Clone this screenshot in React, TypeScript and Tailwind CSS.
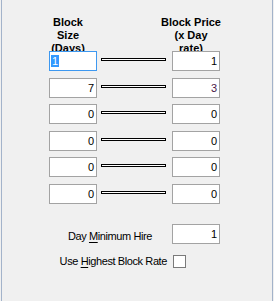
import React from "react";

const font = { fontFamily: '"Liberation Sans", Arial, sans-serif' };

function Box({ value, color = "text-black", focused = false }: { value: string; color?: string; focused?: boolean }) {
  if (focused) {
    return (
      <div className="w-[48px] h-[20px] bg-white border border-[#3d98f0] flex items-center pl-[1px] shrink-0">
        <span className="bg-[#3399ff] text-white text-[11px] leading-[12px] px-[1px]">{value}</span>
      </div>
    );
  }
  return (
    <div className={`w-[48px] h-[20px] bg-white border border-[#a3a3a3] flex items-center justify-end pr-[2px] text-[11px] leading-[12px] shrink-0 ${color}`}>
      {value}
    </div>
  );
}

function Row({ left, right, rightColor, focused, mt }: { left: string; right: string; rightColor?: string; focused?: boolean; mt: string }) {
  return (
    <div className={`flex ml-[47px] ${mt}`}>
      <Box value={left} focused={focused} />
      <div className="ml-[4px] mt-[7px] w-[65px] h-[3px] border border-black bg-white shrink-0" />
      <div className="ml-[6px]">
        <Box value={right} color={rightColor} />
      </div>
    </div>
  );
}

export default function App() {
  return (
    <div className="w-[274px] h-[301px] bg-[#f0f0f0] px-[1px] flex text-black" style={font}>
      <div className="flex-1 border-l border-r border-[#a3b3ca] flex flex-col pt-[14px]">
        <div className="flex h-[37px] overflow-hidden font-bold text-[11px] leading-[13px] pt-[2px]">
          <div className="ml-[36px] w-[60px] text-center">
            Block<br />Size<br />(Days)
          </div>
          <div className="ml-[58px] w-[70px] text-center">
            Block Price<br />(x Day<br />rate)
          </div>
        </div>
        <Row left="1" right="1" focused mt="mt-0" />
        <Row left="7" right="3" rightColor="text-[#4a1848]" mt="mt-[7px]" />
        <Row left="0" right="0" mt="mt-[6px]" />
        <Row left="0" right="0" mt="mt-[7px]" />
        <Row left="0" right="0" mt="mt-[6px]" />
        <Row left="0" right="0" mt="mt-[7px]" />

        <div className="mt-[20px] w-[218px] flex justify-end items-center">
          <span className="text-[11px] leading-[13px] tracking-[-0.4px] pt-[4px]">
            Day <u className="underline-offset-[2px]">M</u>inimum Hire
          </span>
          <div className="ml-[20px]">
            <Box value="1" />
          </div>
        </div>
        <div className="mt-[11px] w-[184px] flex justify-end items-center">
          <span className="text-[11px] leading-[13px] tracking-[-0.4px]">
            Use <u className="underline-offset-[2px]">H</u>ighest Block Rate
          </span>
          <div className="ml-[6px] w-[13px] h-[13px] bg-white border border-[#7a7a7a] shrink-0" />
        </div>
      </div>
    </div>
  );
}
